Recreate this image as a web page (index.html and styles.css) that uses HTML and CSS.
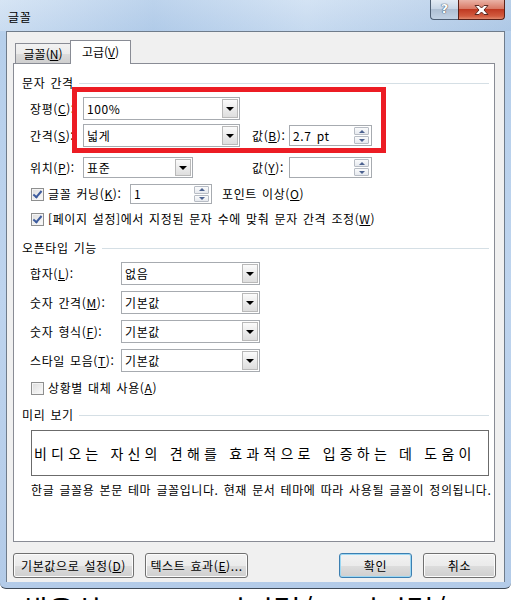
FILE: index.html
```html
<!DOCTYPE html>
<html lang="ko">
  <head>
    <meta charset="UTF-8" />
    <title>글꼴</title>
    <link rel="stylesheet" href="styles.css">
  </head>
  <body>
    <div class="window">
      <div class="titlebar">
        <span class="title">글꼴</span>
        <div class="caption">
          <span class="cap-help">?</span>
          <span class="cap-close">
            <svg width="17" height="10" viewBox="0 0 17 10"><path d="M2 0.5 H6 L8.5 3 L11 0.5 H15 L11 5 L15 9.5 H11 L8.5 7 L6 9.5 H2 L6 5 Z" fill="#fff" stroke="#5b2a22" stroke-width="1"/></svg>
          </span>
        </div>
      </div>

      <div class="client">
        <div class="tabs">
          <div class="tab">글꼴(<u>N</u>)</div>
          <div class="tab active">고급(<u>V</u>)</div>
        </div>

        <div class="panel">
          <div class="group-title">문자 간격</div>

          <div class="row r-scale">
            <span class="lbl w53">장평(<u>C</u>):</span>
            <div class="combo w157"><span class="val">100%</span><span class="drop"></span></div>
          </div>
          <div class="row r-spacing">
            <span class="lbl w53">간격(<u>S</u>):</span>
            <div class="combo w157"><span class="val">넓게</span><span class="drop"></span></div>
            <span class="lbl by">값(<u>B</u>):</span>
            <div class="spin w83"><span class="val">2.7 pt</span><span class="arrows"><i class="up"></i><i class="down"></i></span></div>
          </div>
          <div class="row r-position">
            <span class="lbl w53">위치(<u>P</u>):</span>
            <div class="combo w110"><span class="val">표준</span><span class="drop"></span></div>
            <span class="lbl by wide">값(<u>Y</u>):</span>
            <div class="spin w83"><span class="val"></span><span class="arrows"><i class="up"></i><i class="down"></i></span></div>
          </div>
          <div class="row r-kerning">
            <span class="check on"></span>
            <span class="lbl w82">글꼴 커닝(<u>K</u>):</span>
            <div class="spin w82"><span class="val">1</span><span class="arrows"><i class="up"></i><i class="down"></i></span></div>
            <span class="lbl after">포인트 이상(<u>O</u>)</span>
          </div>
          <div class="row r-grid">
            <span class="check on"></span>
            <span class="lbl">[페이지 설정]에서 지정된 문자 수에 맞춰 문자 간격 조정(<u>W</u>)</span>
          </div>

          <div class="group-title g-open">오픈타입 기능</div>

          <div class="row r-ot">
            <span class="lbl w91">합자(<u>L</u>):</span>
            <div class="combo w139"><span class="val">없음</span><span class="drop"></span></div>
          </div>
          <div class="row r-ot">
            <span class="lbl w91">숫자 간격(<u>M</u>):</span>
            <div class="combo w139"><span class="val">기본값</span><span class="drop"></span></div>
          </div>
          <div class="row r-ot">
            <span class="lbl w91">숫자 형식(<u>F</u>):</span>
            <div class="combo w139"><span class="val">기본값</span><span class="drop"></span></div>
          </div>
          <div class="row r-ot">
            <span class="lbl w91">스타일 모음(<u>T</u>):</span>
            <div class="combo w139"><span class="val">기본값</span><span class="drop"></span></div>
          </div>
          <div class="row r-context">
            <span class="check"></span>
            <span class="lbl">상황별 대체 사용(<u>A</u>)</span>
          </div>

          <div class="group-title g-preview">미리 보기</div>
          <div class="preview">비디오는 자신의 견해를 효과적으로 입증하는 데 도움이</div>
          <div class="note">한글 글꼴용 본문 테마 글꼴입니다. 현재 문서 테마에 따라 사용될 글꼴이 정의됩니다.</div>
        </div>

        <div class="buttons">
          <button class="b-default">기본값으로 설정(<u>D</u>)</button>
          <button class="b-effects">텍스트 효과(<u>E</u>)...</button>
          <span class="spacer"></span>
          <button class="b-ok primary">확인</button>
          <button class="b-cancel">취소</button>
        </div>
      </div>
    </div>

    <div class="doc">채용하 &nbsp; 리터럴/ 리터럴/ 표시/ 기능</div>

    <div class="callout"></div>
  </body>
</html>
```

FILE: styles.css
```css
body {
  margin: 0;
  width: 511px;
  height: 600px;
  overflow: hidden;
  position: relative;
  background: #fff;
  font-family: "Noto Sans CJK KR", "Noto Sans", sans-serif;
  font-size: 12px;
  letter-spacing: 0.6px;
  word-spacing: 1.2px;
  color: #000;
}
u {
  text-decoration: underline;
  text-underline-offset: 1px;
}

/* window frame */
.window {
  height: 589px;
  border-bottom: 1px solid #3f4a57;
  border-radius: 0 0 6px 6px;
  background: linear-gradient(180deg, #c9dcf1 0%, #b6cfeb 6%, #bed4ee 50%, #b3cbe8 100%);
  box-sizing: border-box;
  display: flex;
  flex-direction: column;
}
.titlebar {
  height: 31px;
  display: flex;
  align-items: flex-start;
  background: linear-gradient(90deg, rgba(255,255,255,0.25), rgba(160,190,225,0.3) 30%, rgba(255,255,255,0.2) 60%, rgba(150,180,215,0.3));
}
.title {
  margin: 8px 0 0 8px;
  line-height: 18px;
}
.caption {
  margin-left: auto;
  margin-right: 6px;
  display: flex;
}
.cap-help {
  width: 28px;
  height: 20px;
  box-sizing: border-box;
  border: 1px solid #4e5f74;
  border-top: none;
  border-right: none;
  border-radius: 0 0 0 4px;
  background: linear-gradient(180deg, #e3ebf4 0%, #c8d6e6 45%, #aebfd3 50%, #c2d2e4 100%);
  text-align: center;
  font-family: "DejaVu Sans", sans-serif;
  font-weight: bold;
  font-size: 13px;
  line-height: 18px;
  letter-spacing: 0;
  color: #fff;
  text-shadow: 0 0 1px #2a3a4e, 0 0 1px #2a3a4e;
}
.cap-close {
  width: 47px;
  height: 20px;
  box-sizing: border-box;
  border: 1px solid #5a2118;
  border-top: none;
  border-radius: 0 0 4px 0;
  background: linear-gradient(180deg, #eab3a6 0%, #d97a66 45%, #c03a22 50%, #d25b3f 85%, #e08a6e 100%);
  display: flex;
  align-items: center;
  justify-content: center;
}

.client {
  height: 551px;
  margin: 0 6px;
  border: 1px solid #6f7c8b;
  border-bottom: none;
  background: #f0f0f0;
  box-sizing: border-box;
  display: flex;
  flex-direction: column;
}

/* tabs */
.tabs {
  margin-top: 8px;
  padding-left: 8px;
  height: 23px;
  display: flex;
  align-items: flex-end;
  position: relative;
  z-index: 1;
}
.tab {
  width: 55px;
  height: 20px;
  box-sizing: border-box;
  border: 1px solid #898c95;
  border-right: none;
  border-bottom: none;
  background: linear-gradient(180deg, #f2f2f2 0%, #ebebeb 50%, #dddddd 51%, #cfcfcf 100%);
  text-align: center;
  line-height: 19px;
  letter-spacing: 0;
}
.tab.active {
  width: 61px;
  height: 24px;
  margin-bottom: -1px;
  border-right: 1px solid #898c95;
  background: #fff;
  line-height: 22px;
}

.panel {
  margin: 0 9px 0 6px;
  height: 479px;
  box-sizing: border-box;
  border: 1px solid #898c95;
  background: #fff;
  padding: 11px 5px 0 8px;
}
.group-title {
  display: flex;
  align-items: center;
  height: 16px;
  line-height: 16px;
}
.group-title::after {
  content: "";
  flex: 1;
  margin-left: 5px;
  border-top: 1px solid #d5dfe5;
}
.g-open { margin-top: 13px; }
.g-preview { margin-top: 11px; }

.row {
  display: flex;
  align-items: center;
  padding-left: 8px;
  line-height: 16px;
}
.r-scale { height: 23px; margin-top: 6px; }
.r-spacing { height: 23px; margin-top: 4px; }
.r-position { height: 21px; margin-top: 10px; }
.r-kerning { height: 20px; margin-top: 6px; }
.r-grid { height: 16px; margin-top: 7px; }
.r-ot { height: 23px; margin-top: 6px; }
.r-context { height: 16px; margin-top: 8px; }

.lbl { white-space: nowrap; }
.w53 { width: 53px; flex: none; }
.w91 { width: 91px; flex: none; }
.by { width: 37px; margin-left: 12px; flex: none; }
.by.wide { margin-left: 59px; }
.after { margin-left: 10px; }

/* combo box */
.combo {
  height: 100%;
  box-sizing: border-box;
  border: 1px solid #a7abb0;
  background: #fff;
  display: flex;
  flex: none;
}
.w157 { width: 157px; }
.w110 { width: 110px; }
.w139 { width: 139px; }
.w83 { width: 83px; }
.w82 { width: 82px; flex: none; }
.combo .val {
  flex: 1;
  padding-left: 3px;
  align-self: center;
}
.drop {
  width: 16px;
  margin: 1px;
  box-sizing: border-box;
  border: 1px solid #b9b9b9;
  background: linear-gradient(180deg, #fbfbfb 0%, #ececec 50%, #dedede 100%);
  display: flex;
  align-items: center;
  justify-content: center;
}
.drop::before {
  content: "";
  border-left: 4px solid transparent;
  border-right: 4px solid transparent;
  border-top: 4px solid #000;
}

/* spinner */
.spin {
  height: 21px;
  box-sizing: border-box;
  border: 1px solid #a7abb0;
  background: #fff;
  display: flex;
  flex: none;
}
.r-kerning .spin { height: 20px; }
.spin .val {
  flex: 1;
  padding-left: 3px;
  align-self: center;
}
.arrows {
  width: 15px;
  margin: 1px 2px 1px 0;
  display: flex;
  flex-direction: column;
  gap: 1px;
}
.arrows i {
  flex: 1;
  border: 1px solid #b7bcc4;
  border-radius: 1px;
  background: linear-gradient(180deg, #fafbfc 0%, #e6e9ee 100%);
  display: flex;
  align-items: center;
  justify-content: center;
}
.arrows .up::before {
  content: "";
  border-left: 3px solid transparent;
  border-right: 3px solid transparent;
  border-bottom: 3px solid #4c6290;
}
.arrows .down::before {
  content: "";
  border-left: 3px solid transparent;
  border-right: 3px solid transparent;
  border-top: 3px solid #4c6290;
}

/* checkbox */
.check {
  width: 13px;
  height: 13px;
  box-sizing: border-box;
  margin: 0 4px 0 1px;
  border: 1px solid #8e8f8f;
  background: linear-gradient(135deg, #dcdcdc, #fbfbfb);
  box-shadow: inset 0 0 0 1px #f4f4f4;
  flex: none;
  position: relative;
}
.check.on::after {
  content: "";
  position: absolute;
  left: 3px;
  top: 0px;
  width: 3px;
  height: 7px;
  border: solid #3c5b9e;
  border-width: 0 2px 2px 0;
  transform: rotate(40deg);
}

/* preview */
.preview {
  margin: 7px 0 0 9px;
  height: 46px;
  box-sizing: border-box;
  border: 1px solid #6b6b6b;
  padding-left: 2px;
  font-size: 14px;
  letter-spacing: 4.2px;
  word-spacing: 0;
  line-height: 44px;
  white-space: nowrap;
  overflow: hidden;
}
.note {
  margin: 6px 0 0 9px;
  line-height: 16px;
  white-space: nowrap;
}

/* dialog buttons */
.buttons {
  margin-top: 11px;
  padding: 0 8px 0 6px;
  display: flex;
  gap: 11px;
}
.spacer { flex: 1; }
button {
  height: 25px;
  padding: 0;
  font: inherit;
  letter-spacing: inherit;
  word-spacing: inherit;
  color: #000;
  border: 1px solid #707070;
  border-radius: 3px;
  background: linear-gradient(180deg, #f2f2f2 0%, #ebebeb 50%, #dddddd 51%, #cfcfcf 100%);
  box-shadow: inset 0 0 0 1px #fcfcfc;
}
.b-default { width: 121px; }
.b-effects { width: 103px; }
.b-ok, .b-cancel { width: 73px; }
button.primary {
  border-color: #3c7fb1;
  box-shadow: inset 0 0 0 1px #9bd7f3;
}

/* document behind the dialog */
.doc {
  height: 11px;
  overflow: hidden;
  padding-left: 20px;
  font-size: 30px;
  line-height: 40px;
  letter-spacing: 0;
  white-space: nowrap;
  word-spacing: 30px;
}

/* red annotation box */
.callout {
  position: absolute;
  left: 72px;
  top: 87px;
  width: 314px;
  height: 66px;
  box-sizing: border-box;
  border: 5px solid #ec1c24;
}
```
